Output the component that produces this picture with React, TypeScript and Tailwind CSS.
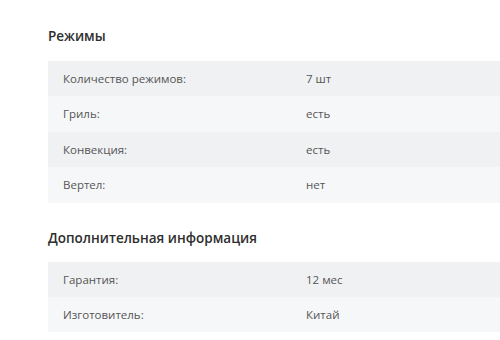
const MODES: [string, string][] = [
  ["Количество режимов:", "7 шт"],
  ["Гриль:", "есть"],
  ["Конвекция:", "есть"],
  ["Вертел:", "нет"],
];

const EXTRA: [string, string][] = [
  ["Гарантия:", "12 мес"],
  ["Изготовитель:", "Китай"],
];

function SpecTable({ rows }: { rows: [string, string][] }) {
  return (
    <div className="flex flex-col">
      {rows.map(([label, value], i) => (
        <div
          key={label}
          className={`flex h-[35.4px] items-center text-[11.5px] text-[#555] ${
            i % 2 === 0 ? "bg-[#f0f1f3]" : "bg-[#f6f7f9]"
          }`}
        >
          <div className="w-[258px] shrink-0 pl-[15px]">{label}</div>
          <div>{value}</div>
        </div>
      ))}
    </div>
  );
}

export default function App() {
  return (
    <div
      className="h-[340px] w-[500px] overflow-hidden bg-white pl-12"
      style={{ fontFamily: '"Open Sans", "Noto Sans", sans-serif' }}
    >
      <h2 className="pt-[26px] pb-[15px] text-[13.5px] leading-5 font-semibold text-[#2e2e2e]">
        Режимы
      </h2>
      <SpecTable rows={MODES} />

      <h2 className="pt-[25px] pb-[14px] text-[13.5px] leading-5 font-semibold text-[#2e2e2e]">
        Дополнительная информация
      </h2>
      <SpecTable rows={EXTRA} />
    </div>
  );
}
